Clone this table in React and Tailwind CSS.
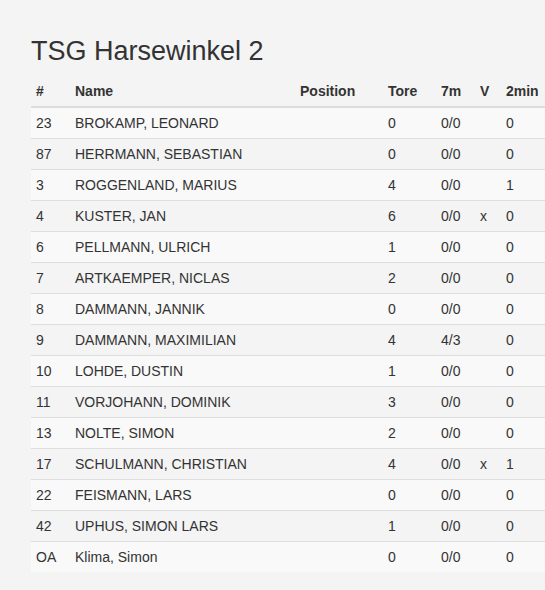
import React from 'react';

const players = [
    ['23', 'BROKAMP, LEONARD', '0', '0/0', '', '0'],
    ['87', 'HERRMANN, SEBASTIAN', '0', '0/0', '', '0'],
    ['3', 'ROGGENLAND, MARIUS', '4', '0/0', '', '1'],
    ['4', 'KUSTER, JAN', '6', '0/0', 'x', '0'],
    ['6', 'PELLMANN, ULRICH', '1', '0/0', '', '0'],
    ['7', 'ARTKAEMPER, NICLAS', '2', '0/0', '', '0'],
    ['8', 'DAMMANN, JANNIK', '0', '0/0', '', '0'],
    ['9', 'DAMMANN, MAXIMILIAN', '4', '4/3', '', '0'],
    ['10', 'LOHDE, DUSTIN', '1', '0/0', '', '0'],
    ['11', 'VORJOHANN, DOMINIK', '3', '0/0', '', '0'],
    ['13', 'NOLTE, SIMON', '2', '0/0', '', '0'],
    ['17', 'SCHULMANN, CHRISTIAN', '4', '0/0', 'x', '1'],
    ['22', 'FEISMANN, LARS', '0', '0/0', '', '0'],
    ['42', 'UPHUS, SIMON LARS', '1', '0/0', '', '0'],
    ['OA', 'Klima, Simon', '0', '0/0', '', '0'],
];

export default function App() {
    return (
        <div className="min-h-[590px] bg-[#f4f4f4] pl-[31px] pt-[36px] text-[#333] font-['Liberation_Sans',Arial,sans-serif] text-[14px] leading-[20px] overflow-hidden">
            {/* Titel der Mannschaft */}
            <h3 className="text-[27px] leading-[30px] mb-[10px]">TSG Harsewinkel 2</h3>

            <table className="w-[514px] table-fixed border-collapse">
                <colgroup>
                    <col className="w-[39px]" />
                    <col className="w-[225px]" />
                    <col className="w-[88px]" />
                    <col className="w-[53px]" />
                    <col className="w-[39px]" />
                    <col className="w-[26px]" />
                    <col className="w-[44px]" />
                </colgroup>
                <thead>
                    <tr className="border-b-2 border-[#ddd]">
                        {['#', 'Name', 'Position', 'Tore', '7m', 'V', '2min'].map((h) => (
                            <th key={h} className="text-left font-bold px-[5px] py-[5px] whitespace-nowrap">{h}</th>
                        ))}
                    </tr>
                </thead>
                <tbody>
                    {players.map((p, i) => (
                        <tr key={p[0]} className={`border-t border-[#ddd] ${i % 2 === 0 ? 'bg-[#f9f9f9]' : ''}`}>
                            <td className="px-[5px] py-[5px]">{p[0]}</td>
                            <td className="px-[5px] py-[5px] whitespace-nowrap">{p[1]}</td>
                            <td className="px-[5px] py-[5px]"></td>
                            <td className="px-[5px] py-[5px]">{p[2]}</td>
                            <td className="px-[5px] py-[5px]">{p[3]}</td>
                            <td className="px-[5px] py-[5px]">{p[4]}</td>
                            <td className="px-[5px] py-[5px]">{p[5]}</td>
                        </tr>
                    ))}
                </tbody>
            </table>
        </div>
    );
}
